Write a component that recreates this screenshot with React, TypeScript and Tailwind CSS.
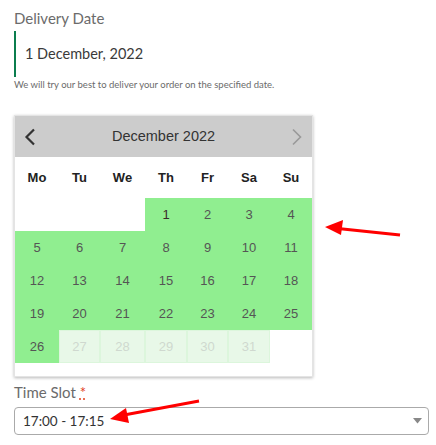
import React from "react";

const colWidths = "grid-cols-[44px_41px_45px_42px_41px_42px_42px]";
const weekdays = ["Mo", "Tu", "We", "Th", "Fr", "Sa", "Su"];

type Cell = { day?: number; state: "empty" | "open" | "off" };

function buildCells(): Cell[] {
  const cells: Cell[] = [];
  for (let i = 0; i < 3; i++) cells.push({ state: "empty" });
  for (let d = 1; d <= 31; d++) cells.push({ day: d, state: d <= 26 ? "open" : "off" });
  cells.push({ state: "empty" });
  return cells;
}

function Calendar() {
  const cells = buildCells();
  return (
    <div className="mt-[24px] w-[299px] border border-[#e4e4e4] bg-white pb-[13px] shadow-[0_1px_3px_rgba(0,0,0,0.28)] font-['Liberation_Sans',Arial,sans-serif]">
      <div className="flex h-[41px] items-center justify-between bg-[#cccccc] px-[9px]">
        <svg width="12" height="18" viewBox="0 0 12 18" className="text-[#333]">
          <path d="M10 1.5 L2.5 9 L10 16.5" fill="none" stroke="currentColor" strokeWidth="2.2" />
        </svg>
        <span className="text-[14.5px] text-[#333]">December 2022</span>
        <svg width="12" height="18" viewBox="0 0 12 18" className="text-[#999]">
          <path d="M2 1.5 L9.5 9 L2 16.5" fill="none" stroke="currentColor" strokeWidth="1.6" />
        </svg>
      </div>
      <div className={`grid ${colWidths} h-[41px] items-center`}>
        {weekdays.map((w) => (
          <div key={w} className="text-center text-[13px] font-bold text-[#222]">
            {w}
          </div>
        ))}
      </div>
      <div className={`grid ${colWidths} auto-rows-[33px]`}>
        {cells.map((c, i) => {
          if (c.state === "empty") return <div key={i} />;
          if (c.state === "off")
            return (
              <div
                key={i}
                className="flex items-center justify-center border border-[#dcf6dc] bg-[#e8f8e8] text-[13px] text-[#cfd8cf]"
              >
                {c.day}
              </div>
            );
          return (
            <div
              key={i}
              className={`flex items-center justify-center bg-[#90ee90] text-[13px] ${c.day === 1 ? "text-[#3a2a2a]" : "text-[#555]"}`}
            >
              {c.day}
            </div>
          );
        })}
      </div>
    </div>
  );
}

export default function App() {
  return (
    <div className="relative h-[445px] w-[436px] overflow-hidden bg-white font-['Lato','Noto_Sans',sans-serif]">
      <div className="px-[14px] pt-[8px]">
        <div className="text-[15px] leading-[20px] text-[#6b6b6b]">Delivery Date</div>
        <div className="mt-[3px] flex h-[46px] items-center border-l-2 border-[#0b7d4e] pl-[9px] text-[14.5px] text-[#3a3a3a]">
          1 December, 2022
        </div>
        <p className="mt-[2px] text-[9.5px] leading-[12px] text-[#6b6b6b]">
          We will try our best to deliver your order on the specified date.
        </p>
        <Calendar />
        <div className="mt-[5px] text-[15px] leading-[20px] text-[#6b6b6b]">
          Time Slot{" "}
          <abbr title="required" className="text-[#e2401c] underline decoration-dotted">
            *
          </abbr>
        </div>
        <div className="mt-[5px] flex h-[28px] w-[415px] items-center justify-between rounded-[4px] border border-[#aaa] pl-[8px] pr-[6px]">
          <span className="text-[13.5px] text-[#333]">17:00 - 17:15</span>
          <svg width="9" height="6" viewBox="0 0 9 6">
            <path d="M0 0 L9 0 L4.5 5.5 Z" fill="#888" />
          </svg>
        </div>
      </div>

      <svg className="pointer-events-none absolute left-0 top-0" width="436" height="445" viewBox="0 0 436 445">
        <line x1="400" y1="235" x2="338" y2="228.5" stroke="#ff0000" strokeWidth="3" />
        <polygon points="325,227 343,220 341,235" fill="#ff0000" />
        <line x1="199" y1="401" x2="124" y2="415" stroke="#ff0000" strokeWidth="3" />
        <polygon points="110,419 126,408 129,423" fill="#ff0000" />
      </svg>
    </div>
  );
}
